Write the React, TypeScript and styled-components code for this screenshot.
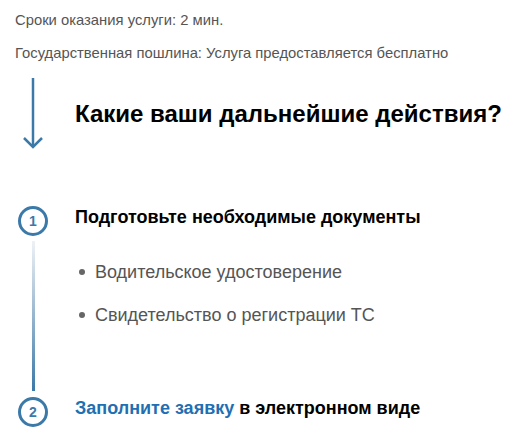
import React from 'react';
import styled, { createGlobalStyle } from 'styled-components';

const GlobalStyle = createGlobalStyle`
  html, body {
    margin: 0;
    padding: 0;
    background: #fff;
  }
  body {
    font-family: "Liberation Sans", Arial, sans-serif;
  }
`;

const Page = styled.div`
  padding: 12px 0 0 15px;
  width: 508px;
  box-sizing: border-box;
`;

const Info = styled.p`
  margin: 0 0 16px;
  font-size: 14.8px;
  line-height: 17px;
  color: #555;
`;

const HeadingRow = styled.div`
  display: grid;
  grid-template-columns: 36px 1fr;
  column-gap: 24px;
  align-items: center;
  margin-top: 2px;
`;

const ArrowBox = styled.div`
  display: flex;
  justify-content: center;
  height: 72px;
`;

const Heading = styled.h2`
  margin: 0;
  font-size: 24px;
  line-height: 28px;
  font-weight: bold;
  color: #000;
`;

const Steps = styled.div`
  margin-top: 56px;
  display: flex;
  flex-direction: column;
`;

const Step = styled.div`
  display: grid;
  grid-template-columns: 36px 1fr;
  column-gap: 24px;
`;

const Rail = styled.div`
  display: flex;
  flex-direction: column;
  align-items: center;
`;

const Circle = styled.div`
  width: 30px;
  height: 30px;
  box-sizing: border-box;
  border: 3px solid #3b79a8;
  border-radius: 50%;
  display: flex;
  align-items: center;
  justify-content: center;
  font-size: 14px;
  font-weight: bold;
  color: #3b79a8;
  flex: none;
`;

const Line = styled.div`
  flex: 1;
  width: 3px;
  margin: 5px 0 6px;
  background: linear-gradient(to bottom, #eef2f6 0%, #a9c1d6 40%, #3b79a8 100%);
`;

const Body = styled.div<{ $last?: boolean }>`
  padding-bottom: ${(p) => (p.$last ? '0' : '71px')};
`;

const StepTitle = styled.div`
  font-size: 18px;
  font-weight: bold;
  color: #000;
  line-height: 22px;
`;

const Link = styled.a`
  color: #1f6fb2;
  text-decoration: none;
`;

const List = styled.ul`
  list-style: none;
  margin: 33px 0 0;
  padding: 0;
  display: flex;
  flex-direction: column;
  gap: 21px;
`;

const Item = styled.li`
  display: flex;
  align-items: center;
  font-size: 18px;
  line-height: 22px;
  color: #555;
  &::before {
    content: '';
    width: 6px;
    height: 6px;
    border-radius: 50%;
    background: #666;
    margin: 0 10px 0 4px;
    flex: none;
  }
`;

const DownArrow = () => (
  <svg width="22" height="72" viewBox="0 0 22 72" fill="none">
    <line x1="11" y1="0" x2="11" y2="69" stroke="#3b79a8" strokeWidth="2.5" />
    <polyline points="2,60 11,69 20,60" stroke="#3b79a8" strokeWidth="2.5" fill="none" />
  </svg>
);

export default function App() {
  return (
    <>
      <GlobalStyle />
      <Page>
        <Info>Сроки оказания услуги: 2 мин.</Info>
        <Info>Государственная пошлина: Услуга предоставляется бесплатно</Info>
        <HeadingRow>
          <ArrowBox>
            <DownArrow />
          </ArrowBox>
          <Heading>Какие ваши дальнейшие действия?</Heading>
        </HeadingRow>
        <Steps>
          <Step>
            <Rail>
              <Circle>1</Circle>
              <Line />
            </Rail>
            <Body>
              <StepTitle>Подготовьте необходимые документы</StepTitle>
              <List>
                <Item>Водительское удостоверение</Item>
                <Item>Свидетельство о регистрации ТС</Item>
              </List>
            </Body>
          </Step>
          <Step>
            <Rail>
              <Circle>2</Circle>
            </Rail>
            <Body $last>
              <StepTitle>
                <Link href="#">Заполните заявку</Link> в электронном виде
              </StepTitle>
            </Body>
          </Step>
        </Steps>
      </Page>
    </>
  );
}
